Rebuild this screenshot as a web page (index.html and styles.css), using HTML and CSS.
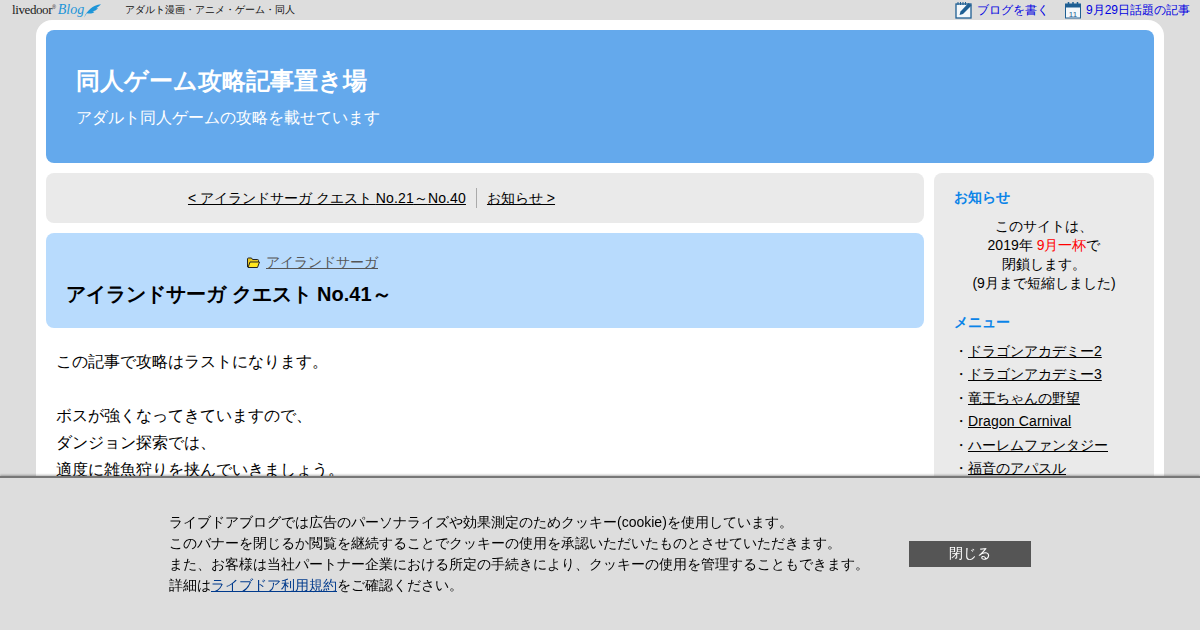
FILE: index.html
```html
<!DOCTYPE html>
<html lang="ja">
<head>
<meta charset="utf-8">
<title>同人ゲーム攻略記事置き場</title>
<link rel="stylesheet" href="styles.css">
</head>
<body>
<div class="topbar">
  <div class="top-left">
    <a class="ld-logo"><span class="ld-word">livedoor</span><span class="ld-reg">®</span><span class="ld-blog">Blog</span>
      <svg class="ld-wing" width="17" height="15" viewBox="0 0 18 15"><path d="M0 15C3 8 9 2 18 1c-2 2-3 3-5 4h2c-2 2-4 3-6 3l2 1C9 11 6 11 3 10.500z" fill="#1d95d8"/></svg>
    </a>
    <span class="top-desc">アダルト漫画・アニメ・ゲーム・同人</span>
  </div>
  <div class="top-right">
    <a class="top-link"><svg width="18" height="18" viewBox="0 0 18 18"><rect x="1" y="3" width="15" height="14" fill="#f4f8fb" stroke="#1f5f93" stroke-width="1.300"/><path d="M3 1v3M5.500 1v3M8 1v3M10.500 1v3" stroke="#1f5f93"/><path d="M4.500 14l1-3.500 8-8.500 3 2.500-8.500 8.500z" fill="#1f5f93"/></svg>ブログを書く</a>
    <a class="top-link cal-link"><svg width="17" height="18" viewBox="0 0 17 18"><rect x="0.500" y="3" width="15" height="14" fill="#f4f8fb" stroke="#1f5f93"/><rect x="0.500" y="3" width="15" height="3.500" fill="#1f5f93"/><path d="M3.500 1v3M8 1v3M12.500 1v3" stroke="#1f5f93" stroke-width="1.500"/><text x="8" y="15.500" class="cal-num">11</text></svg>9月29日話題の記事</a>
  </div>
</div>
<div class="wrapper">
  <header class="site-header">
    <h1 class="site-title">同人ゲーム攻略記事置き場</h1>
    <p class="site-sub">アダルト同人ゲームの攻略を載せています</p>
  </header>
  <div class="columns">
    <main class="main">
      <nav class="pager">
        <a class="pager-link pager-prev">&lt; アイランドサーガ クエスト <span class="lat">No.21</span>～<span class="lat">No.40</span></a>
        <a class="pager-link pager-next">お知らせ &gt;</a>
      </nav>
      <section class="art-head">
        <div class="art-cat">
          <svg width="15" height="13" viewBox="0 0 15 13"><path d="M1.500 11V3q0-1 1-1h3l1 1.500h5q1 0 1 1V6" fill="#e8c820" stroke="#222"/><path d="M2 11.500 4 6h9.500l-2 5.500z" fill="#ffe61e" stroke="#222"/></svg>
          <a class="cat-link">アイランドサーガ</a>
        </div>
        <h2 class="art-title">アイランドサーガ クエスト No.41～</h2>
      </section>
      <article class="art-body">
        この記事で攻略はラストになります。<br><br>
        ボスが強くなってきていますので、<br>
        ダンジョン探索では、<br>
        適度に雑魚狩りを挟んでいきましょう。
      </article>
    </main>
    <aside class="side">
      <h3 class="side-title">お知らせ</h3>
      <p class="notice">このサイトは、<br>2019年 <span class="red">9月一杯</span>で<br>閉鎖します。<br>(9月まで短縮しました)</p>
      <h3 class="side-title menu-title">メニュー</h3>
      <ul class="menu">
        <li><a>ドラゴンアカデミー2</a></li>
        <li><a>ドラゴンアカデミー3</a></li>
        <li><a>竜王ちゃんの野望</a></li>
        <li><a class="lat">Dragon Carnival</a></li>
        <li><a>ハーレムファンタジー</a></li>
        <li><a>福音のアパスル</a></li>
      </ul>
    </aside>
  </div>
</div>
<div class="cookie">
  <p class="cookie-text">ライブドアブログでは広告のパーソナライズや効果測定のためクッキー(cookie)を使用しています。<br>
  このバナーを閉じるか閲覧を継続することでクッキーの使用を承認いただいたものとさせていただきます。<br>
  また、お客様は当社パートナー企業における所定の手続きにより、クッキーの使用を管理することもできます。<br>
  詳細は<a class="cookie-link">ライブドア利用規約</a>をご確認ください。</p>
  <button class="cookie-btn">閉じる</button>
</div>
</body>
</html>
```

FILE: styles.css
```css
* { box-sizing: border-box; }
html, body { margin: 0; height: 630px; overflow: hidden; }
body {
  background: #ddd;
  color: #000;
  font-family: "Liberation Sans", sans-serif;
  font-size: 15px;
}
a { cursor: pointer; }
.lat { letter-spacing: 0.14px; }
.topbar {
  height: 20px;
  display: flex;
  justify-content: space-between;
  align-items: center;
  padding: 0 10px 0 12px;
}
.top-left, .top-right { display: flex; align-items: center; }
.ld-logo { display: flex; align-items: center; width: 113px; height: 20px; }
.ld-word { font-family: "Liberation Serif", serif; font-size: 13px; letter-spacing: -0.4px; color: #222; }
.ld-reg { font-size: 5px; align-self: flex-start; margin-top: 4px; color: #222; }
.ld-blog { font-family: "Liberation Serif", serif; font-style: italic; font-size: 14px; color: #1d95d8; margin-left: 2px; }
.top-desc { font-size: 10px; color: #111; }
.top-link { display: flex; align-items: center; gap: 4px; font-size: 12px; color: #0000e0; margin-left: 16px; }
.cal-num { font-size: 8px; text-anchor: middle; fill: #1f5f93; font-family: "Liberation Sans", sans-serif; }
.wrapper {
  width: 1128px;
  margin: 0 auto;
  padding: 10px;
  background: #fff;
  border-radius: 16px;
}
.site-header {
  height: 133px;
  padding: 35px 30px 0;
  background: #64a9ec;
  border-radius: 8px;
  color: #fff;
}
.site-title { margin: 0; font-size: 24px; line-height: 32px; font-weight: bold; }
.site-sub { margin: 9px 0 0; font-size: 16px; line-height: 24px; }
.columns { display: flex; gap: 10px; margin-top: 10px; align-items: flex-start; }
.main { width: 878px; }
.pager {
  height: 50px;
  display: flex;
  align-items: center;
  justify-content: center;
  padding-right: 227px;
  background: #eaeaea;
  border-radius: 8px;
}
.pager-link { color: #000; text-decoration: underline; font-size: 14px; }
.pager-prev { padding-right: 10px; border-right: 1px solid #aaa; line-height: 20px; }
.pager-next { padding-left: 10px; line-height: 20px; }
.art-head {
  height: 95px;
  margin-top: 10px;
  padding: 18px 20px 0;
  background: #b8dbfd;
  border-radius: 8px;
}
.art-cat { display: flex; align-items: center; justify-content: center; gap: 5px; padding-right: 346px; line-height: 22px; }
.cat-link { color: #555; text-decoration: underline; font-size: 14px; }
.art-title { margin: 7px 0 0; font-size: 20px; line-height: 28px; font-weight: bold; }
.art-body { padding: 20px 10px; font-size: 16px; line-height: 27px; }
.side {
  width: 220px;
  height: 600px;
  padding: 14px 20px;
  background: #eaeaea;
  border-radius: 8px;
}
.side-title { margin: 0; font-size: 14px; line-height: 20px; font-weight: bold; color: #0a84e8; }
.notice { margin: 10px 0 0; font-size: 14px; line-height: 19px; text-align: center; }
.red { color: #f00; }
.menu-title { margin-top: 19px; }
.menu { list-style: none; margin: 8px 0 0; padding: 0; font-size: 14px; line-height: 23.400px; }
.menu li::before { content: "・"; display: inline-block; width: 14px; }
.menu a { color: #000; text-decoration: underline; }
.cookie {
  position: fixed;
  left: 0;
  right: 0;
  bottom: 0;
  height: 154px;
  display: flex;
  align-items: flex-start;
  padding: 34px 0 0 169px;
  background: #ddd;
  border-top: 2px solid #777;
  box-shadow: 0 -1px 2px rgba(0,0,0,.3);
}
.cookie-text { margin: 0; width: 740px; font-size: 14px; line-height: 21px; color: #000; }
.cookie-link { color: #003a8c; text-decoration: underline; }
.cookie-btn {
  width: 122px;
  height: 26px;
  margin: 29px 0 0 0;
  border: 0;
  background: #555;
  color: #fff;
  font: 14px "Liberation Sans", sans-serif;
}
```
